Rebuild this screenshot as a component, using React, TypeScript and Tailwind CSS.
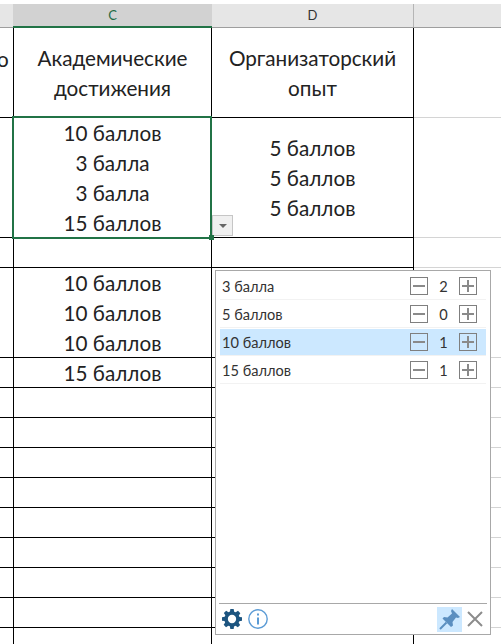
const font = { fontFamily: 'Lato, Carlito, "Open Sans", sans-serif' }

const rows: { h: string; c?: string[]; d?: string[] }[] = [
  { h: 'h-[90px]', c: ['Академические', 'достижения'], d: ['Организаторский', 'опыт'] },
  { h: 'h-[120px]', c: ['10 баллов', '3 балла', '3 балла', '15 баллов'], d: ['5 баллов', '5 баллов', '5 баллов'] },
  { h: 'h-[30px]' },
  { h: 'h-[90px]', c: ['10 баллов', '10 баллов', '10 баллов'] },
  { h: 'h-[30px]', c: ['15 баллов'] },
  { h: 'h-[30px]' },
  { h: 'h-[30px]' },
  { h: 'h-[30px]' },
  { h: 'h-[30px]' },
  { h: 'h-[30px]' },
  { h: 'h-[30px]' },
  { h: 'h-[30px]' },
  { h: 'h-[30px]' },
  { h: 'h-[30px]' },
]

const counts = [
  { label: '3 балла', n: 2 },
  { label: '5 баллов', n: 0 },
  { label: '10 баллов', n: 1, active: true },
  { label: '15 баллов', n: 1 },
]

function Cell({ lines }: { lines?: string[] }) {
  return (
    <div className="flex flex-col items-center justify-center h-full text-[20.7px] leading-[30px] text-[#222]">
      {lines?.map((l, i) => <span key={i}>{l}</span>)}
    </div>
  )
}

function StepBtn({ plus }: { plus?: boolean }) {
  return (
    <span className="w-[18px] h-[18px] border border-[#7f7f7f] flex items-center justify-center">
      <svg width="12" height="12" viewBox="0 0 12 12" fill="none" stroke="#8a8a8a" strokeWidth="2">
        <path d="M0 6h12" />
        {plus && <path d="M6 0v12" />}
      </svg>
    </span>
  )
}

export default function App() {
  return (
    <div className="relative w-[501px] h-[644px] overflow-hidden bg-white" style={font}>
      <div className="h-[4px]" />
      {/* заголовки колонок */}
      <div className="flex h-[24px] bg-[#e6e6e6] border-b border-[#9e9e9e] text-[13px] text-center">
        <div className="w-[13px]" />
        <div className="w-[199px] bg-[#d2d2d2] text-[#1f6b45] border-b-2 border-[#217346] h-[24px] leading-[22px]">C</div>
        <div className="w-[201px] text-[#333] leading-[22px]">D</div>
        <div className="flex-1 border-l border-[#b5b5b5]" />
      </div>

      {rows.map((r, i) => (
        <div key={i} className={`flex ${r.h}`}>
          <div className="w-[14px] border-r border-b border-black overflow-hidden text-[20.7px] text-[#222]">
            {i === 0 && <div className="-ml-[3px] mt-[16px] leading-[30px]">о</div>}
          </div>
          <div className="w-[198px] border-r border-b border-black"><Cell lines={r.c} /></div>
          <div className="w-[202px] border-r border-b border-black"><Cell lines={r.d} /></div>
          <div className="flex-1 border-b border-[#d4d4d4]" />
        </div>
      ))}

      {/* выделенная ячейка */}
      <div className="absolute left-[12px] top-[116px] w-[200px] h-[123px] border-2 border-[#217346]" />
      <button className="absolute left-[212px] top-[215px] w-[21px] h-[21px] bg-[#f0f0f0] border border-[#c6c6c6] flex items-center justify-center">
        <span className="w-0 h-0 border-x-[4px] border-x-transparent border-t-[4px] border-t-[#666]" />
      </button>
      <div className="absolute left-[209px] top-[235px] w-[5px] h-[5px] bg-[#217346]" />

      {/* панель подсчёта */}
      <div className="absolute left-[215px] top-[270px] w-[276px] h-[365px] bg-white border border-[#a8a8a8] flex flex-col">
        <div className="flex-1 pt-[1px] px-[4px]">
          {counts.map(c => (
            <div key={c.label} className="h-[28px] pt-[1px] border-b border-[#f2f2f2]">
              <div className={`flex items-center h-[26px] ${c.active ? 'bg-[#cce8ff]' : ''}`}>
                <span className="flex-1 pl-[2px] pt-[1px] text-[14.6px] text-[#333]">{c.label}</span>
                <StepBtn />
                <span className="w-[31px] pt-[1px] text-center text-[14.6px] text-[#333]">{c.n}</span>
                <StepBtn plus />
                <span className="w-[9px]" />
              </div>
            </div>
          ))}
        </div>
        <div className="mx-[3px] border-t border-[#a8a8a8] h-[31px] flex items-center pl-[3px] pr-[4px]">
          <svg width="20" height="20" viewBox="0 0 24 24" fill="#1d5580">
            <path fillRule="evenodd" d="M10 0h4l.6 3.2 1.9.8 2.7-1.800 2.800 2.800-1.800 2.700.8 1.900L24 10v4l-3.200.6-.8 1.900 1.800 2.700-2.800 2.800-2.700-1.800-1.900.8L14 24h-4l-.6-3.200-1.900-.8-2.700 1.800-2.800-2.800 1.800-2.700-.8-1.900L0 14v-4l3.200-.6.8-1.900-1.800-2.700 2.800-2.800 2.700 1.800 1.900-.8zM12 7a5 5 0 1 0 0 10 5 5 0 0 0 0-10z" />
          </svg>
          <svg className="ml-[6px]" width="20" height="20" viewBox="0 0 20 20" fill="none" stroke="#5b9bd5" strokeWidth="1.4">
            <circle cx="10" cy="10" r="9.2" />
            <path d="M10 8.500v7" strokeWidth="2" />
            <path d="M10 4.500v2" strokeWidth="2" />
          </svg>
          <div className="flex-1" />
          <span className="w-[25px] h-[25px] bg-[#cce8ff] flex items-center justify-center">
            <svg width="25" height="25" viewBox="0 0 25 25" fill="#5b8fc0">
              <path d="M15 2l8 8-2 1-2-.5-3.500 4.500.5 3.500-2 1.500L5.500 11.500 7 10l3.500.5L15 6.500 14 4z" />
              <path d="M9.500 15.500L3 22" stroke="#5b8fc0" strokeWidth="2" />
            </svg>
          </span>
          <svg className="ml-[5px]" width="16" height="16" viewBox="0 0 16 16" stroke="#8c8c8c" strokeWidth="2">
            <path d="M1 1l14 14M15 1L1 15" />
          </svg>
        </div>
      </div>
    </div>
  )
}
